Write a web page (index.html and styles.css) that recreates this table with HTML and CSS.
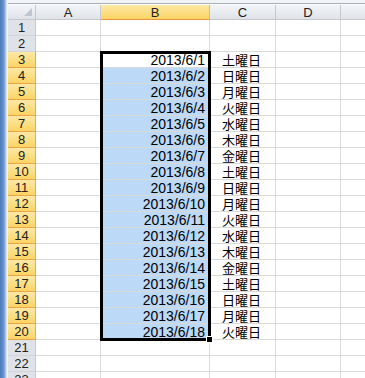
FILE: index.html
```html
<!DOCTYPE html>
<html lang="ja">
<head>
<meta charset="utf-8">
<link rel="stylesheet" href="styles.css">
</head>
<body>
<div class="window">
  <div class="sidebar"></div>
  <div class="main">
    <div class="topstrip"></div>
    <div class="sheet" id="sheet">
      <div class="hdr corner"><span class="tri"></span></div>
      <div class="hdr col">A</div>
      <div class="hdr col sel">B</div>
      <div class="hdr col">C</div>
      <div class="hdr col">D</div>
      <div class="hdr col last"></div>
    </div>
  </div>
</div>
<script src="app.js"></script>
</body>
</html>
```
FILE: app.js
```js
(function () {
  var sheet = document.getElementById('sheet');
  var days = ['土曜日','日曜日','月曜日','火曜日','水曜日','木曜日','金曜日'];
  var html = '';
  for (var r = 1; r <= 23; r++) {
    var inSel = r >= 3 && r <= 20;
    html += '<div class="hdr row' + (inSel ? ' sel' : '') + '">' + r + '</div>';
    html += '<div class="cell"></div>';
    var cls = 'cell num';
    var txt = '';
    if (inSel) {
      txt = '2013/6/' + (r - 2);
      if (r > 3) cls += ' hl';
    }
    html += '<div class="' + cls + '">' + txt + '</div>';
    html += '<div class="cell day">' + (inSel ? '<span class="dt">' + days[(r - 3) % 7] + '</span>' : '') + '</div>';
    html += '<div class="cell"></div>';
    html += '<div class="cell last"></div>';
  }
  sheet.insertAdjacentHTML('beforeend', html + '<div class="selbox"></div><div class="handle"></div>');
})();
```
FILE: styles.css
```css
html, body {
  margin: 0;
  padding: 0;
  background: #fff;
  overflow: hidden;
}
body {
  font-family: "Noto Sans CJK JP", "Noto Sans", sans-serif;
  font-size: 13px;
  color: #000;
}
.window {
  display: flex;
  width: 365px;
  height: 378px;
  overflow: hidden;
}
.sidebar {
  width: 8px;
  flex: none;
  background: linear-gradient(to right, #4c79b8 0, #5f8cc8 3px, #8fb0da 5px, #c7d3e2 6px, #eef1f5 7px, #eef1f5 8px);
}
.main {
  flex: 1;
  display: flex;
  flex-direction: column;
  overflow: hidden;
}
.topstrip {
  height: 5px;
  flex: none;
  background: linear-gradient(to bottom, #f1f3f6 0, #f1f3f6 3px, #a9b0ba 3px, #a9b0ba 4px, #fdfdfd 4px);
}
.sheet {
  position: relative;
  display: grid;
  grid-template-columns: 28px 65px 109px 66px 65px 40px;
  grid-template-rows: 15px;
  grid-auto-rows: 16px;
}
.hdr {
  box-sizing: border-box;
  background: linear-gradient(to bottom, #f3f5f8, #dfe3e8);
  border-right: 1px solid #c4c9d0;
  border-bottom: 1px solid #c4c9d0;
  color: #222;
  display: flex;
  align-items: center;
  justify-content: center;
  font-family: "Liberation Sans", "Noto Sans", sans-serif;
  font-size: 13px;
  line-height: 1;
  overflow: hidden;
}
.hdr.row {
  background: #dfe3e8;
  border-bottom: 1px solid #d0d5db;
}
.hdr.sel {
  background: linear-gradient(to bottom, #fde9a6, #fbd463);
  border-right: 1px solid #f2a64c;
  border-bottom: 1px solid #e8a54a;
  color: #222;
}
.hdr.col.sel {
  border-right: 1px solid #f0b45a;
  border-bottom: 1px solid #f2943e;
}
.corner {
  position: relative;
}
.corner .tri {
  position: absolute;
  right: 3px;
  bottom: 3px;
  width: 0;
  height: 0;
  border-left: 8px solid transparent;
  border-bottom: 8px solid #c0c6ce;
}
.cell {
  box-sizing: border-box;
  border-right: 1px solid #d9d9d9;
  border-bottom: 1px solid #d9d9d9;
  display: flex;
  align-items: center;
  line-height: 1;
  white-space: nowrap;
}
.cell.last, .hdr.last {
  border-right: none;
}
.num {
  justify-content: flex-end;
  padding-right: 4px;
  font-family: "Liberation Sans", "Noto Sans", sans-serif;
  font-size: 14px;
}
.num.hl {
  background: #bcd9f8;
}
.day {
  padding-left: 12px;
  align-items: flex-start;
}
.dt {
  display: inline-block;
  height: 15px;
  line-height: 15px;
  font-size: 13px;
}
.selbox {
  position: absolute;
  left: 92px;
  top: 46px;
  width: 111px;
  height: 290px;
  box-sizing: border-box;
  border: 3px solid #000;
  pointer-events: none;
}
.handle {
  position: absolute;
  left: 199px;
  top: 332px;
  width: 5px;
  height: 5px;
  background: #000;
  outline: 1px solid #fff;
}
```
